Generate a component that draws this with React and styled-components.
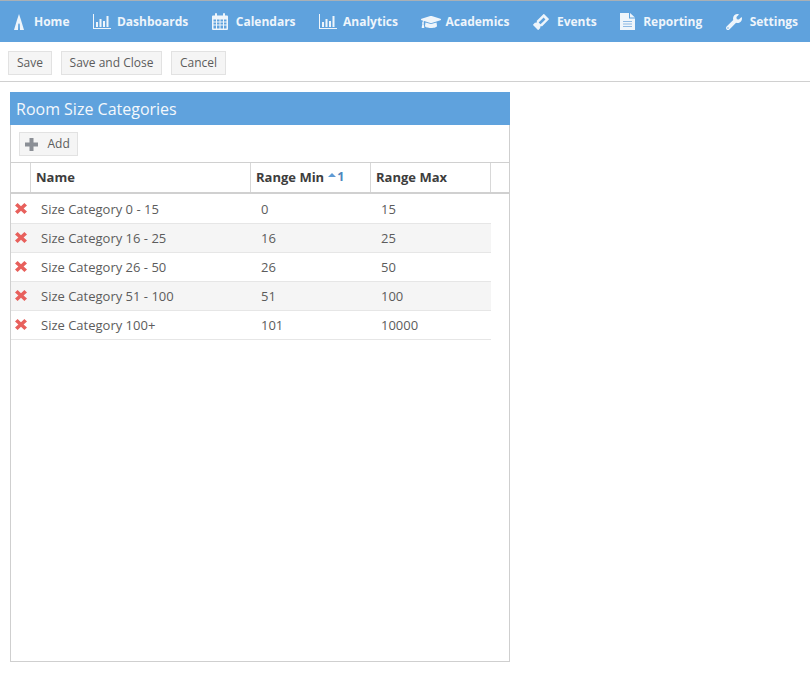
import React from 'react';
import styled, { createGlobalStyle } from 'styled-components';
import { FaGraduationCap, FaWrench } from 'react-icons/fa';

const GlobalStyle = createGlobalStyle`
  html, body {
    margin: 0;
    padding: 0;
    background: #fff;
    font-family: "Open Sans", "Liberation Sans", sans-serif;
  }
`;

// Top navigation
const NavBar = styled.nav`
  display: flex;
  align-items: center;
  gap: 23.5px;
  height: 41px;
  padding-left: 14px;
  background-color: #5fa2dd;
  border-top: 1px solid #a9b0b6;
  overflow: hidden;
`;

const NavItem = styled.a`
  display: flex;
  align-items: center;
  gap: ${(p) => p.$gap}px;
  color: #eef5fb;
  font-size: 12px;
  font-weight: 700;
  white-space: nowrap;
  svg {
    display: block;
    flex-shrink: 0;
  }
`;

// Save bar
const ActionBar = styled.div`
  display: flex;
  gap: 8.6px;
  height: 40px;
  padding: 9px 8px 0;
  box-sizing: border-box;
  border-bottom: 1px solid #d0d0d0;
`;

const Button = styled.button`
  display: flex;
  align-items: center;
  height: 24px;
  padding: ${(p) => (p.$icon ? '0 7.6px 2px 5px' : '0 8px 2px')};
  gap: 9.5px;
  background-color: #f5f5f5;
  border: 1px solid #e2e2e2;
  color: #5c5c5c;
  font-family: inherit;
  font-size: 12px;
  svg {
    color: #8b8f96;
    margin-top: 2px;
  }
`;

// Panel
const Panel = styled.section`
  display: flex;
  flex-direction: column;
  width: 500px;
  height: 570px;
  margin: 10px 0 0 10px;
  box-sizing: border-box;
  border: 1px solid #cfcfcf;
  border-top: 0;
`;

const PanelTitle = styled.h2`
  margin: 0 -1px;
  height: 33px;
  padding-left: 6px;
  background-color: #5fa2dd;
  color: #f4f8fc;
  font-size: 16px;
  font-weight: 400;
  line-height: 34px;
`;

const GridToolbar = styled.div`
  height: 38px;
  padding: 7px 8px 0;
  box-sizing: border-box;
  border-bottom: 1px solid #d0d0d0;
`;

const HeaderRow = styled.div`
  display: grid;
  grid-template-columns: 20px 220px 120px 120px 1fr;
  height: 29px;
  border-bottom: 2px solid #d0d0d0;
`;

const HeaderCell = styled.div`
  display: flex;
  align-items: center;
  gap: 4px;
  padding: 0 0 2px 5px;
  border-right: 1px solid #d8d8d8;
  color: #3d3d3d;
  font-size: 13px;
  font-weight: 700;
  white-space: nowrap;
  &:last-child {
    border-right: 0;
  }
`;

const SortMark = styled.span`
  display: flex;
  align-items: center;
  gap: 1px;
  color: #4f86bd;
  font-size: 12.5px;
  font-weight: 700;
  &::before {
    content: '';
    border-left: 4.5px solid transparent;
    border-right: 4.5px solid transparent;
    border-bottom: 4.5px solid #5f9bd5;
    margin-bottom: 3px;
  }
`;

const RowList = styled.div`
  padding-top: 1px;
`;

const Row = styled.div`
  display: grid;
  grid-template-columns: 20px 220px 120px 120px;
  width: 480px;
  height: 29px;
  box-sizing: border-box;
  border-bottom: 1px solid #e6e6e6;
  background-color: ${(p) => (p.$alt ? '#f5f5f5' : '#fff')};
`;

const DeleteCell = styled.div`
  display: flex;
  align-items: center;
  justify-content: center;
  padding-bottom: 1px;
  color: #e8605c;
`;

const Cell = styled.div`
  display: flex;
  align-items: center;
  padding-left: 10px;
  color: #5c5c5c;
  font-size: 13px;
  white-space: nowrap;
`;

// Drawn icons, the packages don't carry these FontAwesome 4 shapes
const Steeple = () => (
  <svg width="10" height="16" viewBox="0 0 10 16" fill="currentColor">
    <path d="M5 0 L7 6 L8.200 10 L10 16 L6 16 L5.800 10.500 L5 9 L4.200 10.500 L4 16 L0 16 L1.800 10 L3 6 Z" />
  </svg>
);

const BarsIcon = () => (
  <svg width="18" height="15" viewBox="0 0 18 15" fill="currentColor">
    <path d="M0 0h1v14h17v1H0z" />
    <path d="M3 8h2v5H3zM6.500 5h2v8h-2zM10 7h2v6h-2zM13.500 2h2v11h-2z" />
  </svg>
);

const CalendarIcon = () => (
  <svg width="16" height="17" viewBox="0 0 16 17" fill="currentColor">
    <path
      fillRule="evenodd"
      d="M1 2.500h14a1 1 0 0 1 1 1V16a1 1 0 0 1-1 1H1a1 1 0 0 1-1-1V3.500a1 1 0 0 1 1-1zM1.500 6.500v2h2.500v-2zM5 6.500v2h2.500v-2zM8.500 6.500v2H11v-2zM12 6.500v2h2.500v-2zM1.500 9.500v2h2.500v-2zM5 9.500v2h2.500v-2zM8.500 9.500v2H11v-2zM12 9.500v2h2.500v-2zM1.500 12.500v3h2.500v-3zM5 12.500v3h2.500v-3zM8.500 12.500v3H11v-3zM12 12.500v3h2.500v-3z"
    />
    <rect x="3" y="0" width="2" height="4.500" rx="1" />
    <rect x="11" y="0" width="2" height="4.500" rx="1" />
  </svg>
);

const TicketIcon = () => (
  <svg width="16" height="16" viewBox="0 0 16 16" fill="currentColor">
    <path
      fillRule="evenodd"
      transform="rotate(-45 8 8)"
      d="M0.200 4.200h3.300a1 1 0 0 0 2 0h10.300v7.600H5.500a1 1 0 0 0-2 0H0.200zM6 6.700v2.600h7V6.700z"
    />
  </svg>
);

const FileIcon = () => (
  <svg width="15" height="17" viewBox="0 0 15 17">
    <path fill="currentColor" d="M0 0h9v5.500h6V17H0z" />
    <path fill="currentColor" d="M10 0l5 4.500h-5z" />
    <path fill="#8db9e4" d="M3 8h9v1H3zM3 10.500h9v1H3zM3 13h9v1H3z" />
  </svg>
);

const CrossIcon = () => (
  <svg width="12" height="11" viewBox="0 0 12 11" fill="currentColor">
    <path d="M2.600 0L6 3.200 9.400 0 12 2.600 8.600 5.500 12 8.400 9.400 11 6 7.800 2.600 11 0 8.400 3.400 5.500 0 2.600z" />
  </svg>
);

const PlusIcon = () => (
  <svg width="13" height="13" viewBox="0 0 13 13" fill="currentColor">
    <path d="M4.500 0h4v4.500H13v4H8.500V13h-4V8.500H0v-4h4.500z" />
  </svg>
);

const navItems = [
  { label: 'Home', icon: <Steeple />, gap: 10 },
  { label: 'Dashboards', icon: <BarsIcon />, gap: 6 },
  { label: 'Calendars', icon: <CalendarIcon />, gap: 8 },
  { label: 'Analytics', icon: <BarsIcon />, gap: 6 },
  { label: 'Academics', icon: <FaGraduationCap size={20} />, gap: 4 },
  { label: 'Events', icon: <TicketIcon />, gap: 8 },
  { label: 'Reporting', icon: <FileIcon />, gap: 8 },
  { label: 'Settings', icon: <FaWrench size={16} />, gap: 8 },
];

const categories = [
  { name: 'Size Category 0 - 15', min: 0, max: 15 },
  { name: 'Size Category 16 - 25', min: 16, max: 25 },
  { name: 'Size Category 26 - 50', min: 26, max: 50 },
  { name: 'Size Category 51 - 100', min: 51, max: 100 },
  { name: 'Size Category 100+', min: 101, max: 10000 },
];

const App = () => {
  return (
    <>
      <GlobalStyle />
      <NavBar>
        {navItems.map((item) => (
          <NavItem key={item.label} $gap={item.gap}>
            {item.icon}
            {item.label}
          </NavItem>
        ))}
      </NavBar>

      <ActionBar>
        <Button>Save</Button>
        <Button>Save and Close</Button>
        <Button>Cancel</Button>
      </ActionBar>

      <Panel>
        <PanelTitle>Room Size Categories</PanelTitle>
        <GridToolbar>
          <Button $icon>
            <PlusIcon />
            Add
          </Button>
        </GridToolbar>
        <HeaderRow>
          <HeaderCell />
          <HeaderCell>Name</HeaderCell>
          <HeaderCell>
            Range Min
            <SortMark>1</SortMark>
          </HeaderCell>
          <HeaderCell>Range Max</HeaderCell>
          <HeaderCell />
        </HeaderRow>
        <RowList>
          {categories.map((row, i) => (
            <Row key={row.name} $alt={i % 2 === 1}>
              <DeleteCell>
                <CrossIcon />
              </DeleteCell>
              <Cell>{row.name}</Cell>
              <Cell>{row.min}</Cell>
              <Cell>{row.max}</Cell>
            </Row>
          ))}
        </RowList>
      </Panel>
    </>
  );
};

export default App;
